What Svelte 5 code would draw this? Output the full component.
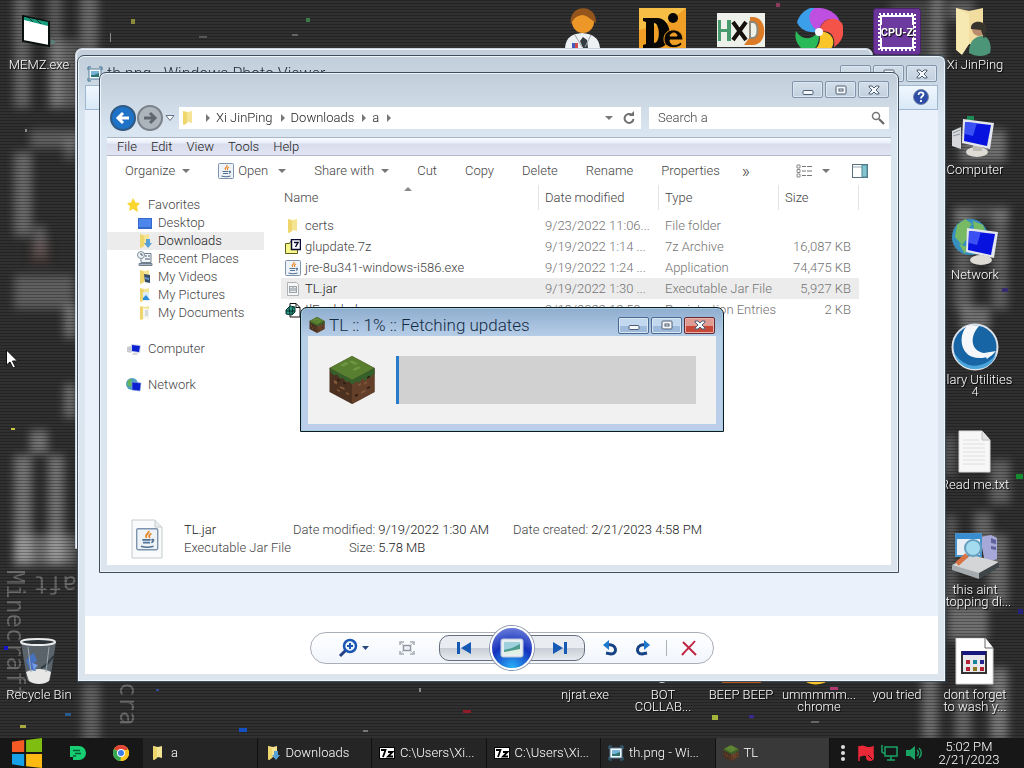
<script>
    const shortcuts = [
        { icon: "memz", label: "MEMZ.exe", col: 1, row: 1 },
        { icon: "recycle", label: "Recycle Bin", col: 1, row: 7 },
        { icon: "doctor", label: "", col: 8, row: 1 },
        { icon: "de", label: "", col: 9, row: 1 },
        { icon: "hxd", label: "", col: 10, row: 1 },
        { icon: "swirl", label: "", col: 11, row: 1 },
        { icon: "cpuz", label: "", col: 12, row: 1 },
        { icon: "user", label: "Xi JinPing", col: 13, row: 1 },
        { icon: "computer", label: "Computer", col: 13, row: 2 },
        { icon: "network", label: "Network", col: 13, row: 3 },
        { icon: "glary", label: "Glary Utilities\n4", col: 13, row: 4 },
        { icon: "text", label: "Read me.txt", col: 13, row: 5 },
        { icon: "diskscan", label: "this aint\nstopping di...", col: 13, row: 6 },
        { icon: "batch", label: "dont forget\nto wash y...", col: 13, row: 7 },
        { icon: "whitebar", label: "njrat.exe", col: 8, row: 7 },
        { icon: "dot", label: "BOT\nCOLLAB...", col: 9, row: 7 },
        { icon: "orangebar", label: "BEEP BEEP", col: 10, row: 7 },
        { icon: "swirl", label: "ummmmm...\nchrome", col: 11, row: 7 },
        { icon: "none", label: "you tried", col: 12, row: 7 },
    ];

    const menus = ["File", "Edit", "View", "Tools", "Help"];

    const places = [
        { icon: "desktop", label: "Desktop" },
        { icon: "downloads", label: "Downloads", current: true },
        { icon: "recent", label: "Recent Places" },
        { icon: "videos", label: "My Videos" },
        { icon: "pictures", label: "My Pictures" },
        { icon: "documents", label: "My Documents" },
    ];

    const files = [
        { icon: "folder", name: "certs", date: "9/23/2022 11:06...", type: "File folder", size: "" },
        { icon: "zip", name: "glupdate.7z", date: "9/19/2022 1:14 ...", type: "7z Archive", size: "16,087 KB" },
        { icon: "java", name: "jre-8u341-windows-i586.exe", date: "9/19/2022 1:24 ...", type: "Application", size: "74,475 KB" },
        { icon: "jar", name: "TL.jar", date: "9/19/2022 1:30 ...", type: "Executable Jar File", size: "5,927 KB", selected: true },
        { icon: "reg", name: "tlEnabled", date: "9/18/2022 12:50...", type: "Registration Entries", size: "2 KB" },
    ];

    const tasks = [
        { icon: "folder", label: "a" },
        { icon: "downloads", label: "Downloads" },
        { icon: "sevenzip", label: "C:\\Users\\Xi..." },
        { icon: "sevenzip", label: "C:\\Users\\Xi..." },
        { icon: "photo", label: "th.png - Wi..." },
        { icon: "grass", label: "TL", active: true },
    ];

    const specks = [
        [131, 19, 4, 5, "#8a8a3a"], [306, 18, 4, 4, "#3d7a4a"], [110, 33, 1, 9, "#888"],
        [199, 36, 8, 2, "#555"], [292, 34, 6, 2, "#666"], [776, 3, 4, 4, "#8a3a5a"],
        [967, 116, 7, 4, "#1c8a55"], [11, 428, 4, 2, "#c6c640"], [4, 646, 4, 4, "#1616c8"],
        [20, 725, 6, 3, "#a9a944"], [65, 713, 6, 3, "#285a90"], [156, 689, 3, 2, "#3548a0"],
        [239, 728, 8, 4, "#1450c0"], [419, 688, 2, 4, "#888"], [463, 710, 8, 3, "#8e1c28"],
        [363, 730, 5, 2, "#777"], [712, 715, 6, 5, "#a5b53c"], [749, 715, 5, 3, "#3a2a90"],
        [830, 687, 8, 3, "#b03a70"], [811, 721, 8, 2, "#666"], [1016, 474, 7, 5, "#168a30"],
        [1018, 609, 5, 5, "#25207a"], [1002, 288, 6, 4, "#352c70"], [25, 129, 2, 3, "#888"],
    ];

    // x, y, width, height, brightness of the blurred shapes
    const blobs = [
        [14, -8, 16, 116, 0.34], [48, -8, 14, 116, 0.28], [80, -8, 18, 60, 0.36],
        [52, 40, 26, 68, 0.3], [30, 130, 50, 18, 0.3], [14, 152, 18, 84, 0.36],
        [64, 140, 12, 20, 0.26], [34, 226, 12, 30, 0.32], [14, 275, 60, 34, 0.3],
        [64, 306, 12, 32, 0.42], [64, 384, 12, 34, 0.4], [30, 430, 18, 24, 0.42],
        [14, 455, 18, 110, 0.42], [48, 455, 16, 110, 0.42], [14, 535, 62, 30, 0.38],
        [82, 684, 18, 60, 0.3], [890, 0, 46, 60, 0.16], [932, -8, 12, 75, 0.4],
        [948, 0, 26, 20, 0.3], [960, 130, 46, 32, 0.4], [954, 206, 56, 14, 0.24],
        [954, 210, 18, 100, 0.3], [992, 210, 16, 100, 0.3], [960, 306, 30, 24, 0.4],
        [945, 435, 10, 40, 0.3], [990, 460, 20, 44, 0.32], [946, 515, 10, 90, 0.3],
        [974, 512, 18, 30, 0.34], [988, 535, 20, 70, 0.36], [948, 606, 40, 34, 0.4],
        [922, 668, 16, 72, 0.38], [955, 690, 16, 50, 0.34], [990, 668, 18, 72, 0.44],
    ];
</script>

{#snippet folder()}
    <path d="M3 1l5 1 4-1v12l-4-1-4 3-1-1z" fill="#f5e493" />
    <path d="M3 1l4 2v10l-3 2-1-1z" fill="#eed66d" />
{/snippet}

{#snippet java()}
    <rect x=".5" y=".5" width="15" height="15" rx="1" fill="#eef3f8" stroke="#7d93ae" />
    <path d="M9 2c1 2-3 2-1.500 5M11 4c-2 1-2 2-1 3" fill="none" stroke="#e58a2c" stroke-width="1.300" />
    <path d="M4.500 8.500h6M5 10.500h5M3.500 13c3 1 6 1 9 0M11 8.500c2-1 2 1 0 2" fill="none" stroke="#527294" stroke-width="1.200" />
{/snippet}

{#snippet grass()}
    <path d="M8 0l7.500 4v8L8 16 .5 12V4z" fill="#4c3020" />
    <path d="M8 8l7.500-4v8L8 16z" fill="#64402a" />
    <path d="M8 0l7.500 4L8 8 .5 4z" fill="#587f30" />
    <path d="M.5 4L8 8l7.500-4v2l-1 .5v.7l-1-.2-1 1.200-1-.7-1 1.300-1-.3-1.500 1-1-1-1 .2-1-1.400-1 .2-1-1.300-1 .3-1-1z" fill="#36602a" />
    <path d="M4 3l2-1 1 .6-2 1zM8 4.500l2-1 1 .4-2 1zM8 1.500l2 1-1 .4-2-1z" fill="#6f9640" />
    <path d="M2 8l1 .5v1L2 9zM4 10l1.500.7v.6L4 10.700zM6 12l1 .5v.6l-1-.5zM3 11l1 .5v.5L3 11.500zM10 9.500l1-.5v.6l-1 .5zM12 9l1-.6v.6l-1 .6zM11 12l1.500-.8v.6L11 12.600z" fill="#80583a" />
    <path d="M5 8.500l1 .6v.5l-1-.5zM3 7.500l1 .6v.5l-1-.5zM13 7l1-.5v.6l-1 .5zM9 13l1-.5v.6l-1 .6zM13 10.500l1-.5v.6l-1 .5z" fill="#2d1b12" />
{/snippet}

{#snippet photo()}
    <path d="M1 4V1h3M12 1h3v3M15 12v3h-3M4 15H1v-3" fill="none" stroke="#376d8c" />
    <rect x="2" y="3" width="12" height="10" fill="#f5fbff" stroke="#557d99" />
    <rect x="4" y="5" width="8" height="6" fill="#77b4dc" />
    <path d="M4 9l3 0 5-2v4H4z" fill="#2d7471" />
{/snippet}

{#snippet monitor()}
    <path d="M1 18l9-4v22l-9-3z" fill="#d5d7db" />
    <path d="M2 20l7-3M2 23l7-2" stroke="#8d939b" />
    <ellipse cx="26" cy="39" rx="11" ry="5" fill="#dedbd4" />
    <path d="M22 32h9v6h-9z" fill="#bdbab4" />
    <path d="M12 6l31 4-4 26-28-6z" fill="#e3e6ec" />
    <path d="M14 9l26 3-4 21-23-5z" fill="#0712df" />
    <path d="M14 9l12 1-4 13-8-2z" fill="#3b50f2" />
{/snippet}

{#snippet glyph(name)}
    <svg class="glyph" viewBox="0 0 16 16" aria-hidden="true">
        {#if name === "folder"}
            {@render folder()}
        {:else if name === "java"}
            {@render java()}
        {:else if name === "grass"}
            {@render grass()}
        {:else if name === "photo"}
            {@render photo()}
        {:else if name === "downloads"}
            {@render folder()}
            <path d="M9 6h4v4h2l-4 5-4-5h2z" fill="#56a0d6" />
        {:else if name === "videos"}
            {@render folder()}
            <path d="M7 5l6 1v8l-5-1z" fill="#384d66" />
            <path d="M8 8l4 1v2l-4-1z" fill="#6695c9" />
        {:else if name === "pictures"}
            {@render folder()}
            <path d="M6 5h6v9H6z" fill="#dcedfa" />
            <path d="M6 11l3-3 4 5H6z" fill="#2b8ed7" />
        {:else if name === "documents"}
            {@render folder()}
            <path d="M6 3l6 1v10l-6-1z" fill="#f5f5ef" />
            <path d="M8 6h3M8 8h3M8 10h3" stroke="#b6c2cf" />
        {:else if name === "desktop"}
            <path d="M1 3h14v11H1z" fill="#3568c8" />
            <path d="M2 4h12v8H2z" fill="#4b86ed" />
        {:else if name === "recent"}
            <path d="M6 2.500h8v9H4v-5" fill="#f1f4f6" stroke="#6f8091" />
            <circle cx="4" cy="4" r="3.500" fill="#edf3f5" stroke="#7f919e" />
            <path d="M4 2v2h2M8 5h2M11 5h2M8 8h5" fill="none" stroke="#4d5f72" />
            <path d="M2 12.500h13v2H2z" fill="#a9b4bf" stroke="#6f8091" />
        {:else if name === "star"}
            <path d="M7 1l2.500 4.500L14 6l-3 3.500 1 5.500-5-3-4 2 1-4.500L1 6l4-.5z" fill="#f8d52f" />
        {:else if name === "computer"}
            <path d="M1 6l4-1v7l-4-1z" fill="#c8cbd2" />
            <path d="M5 3l10 1-1 8-9-1z" fill="#cbd4e6" />
            <path d="M6 4l8 1-1 6-7-1z" fill="#0b21d1" />
            <ellipse cx="9" cy="13" rx="3" ry="1" fill="#d5d4d2" />
        {:else if name === "network"}
            <circle cx="6" cy="7" r="6" fill="#4c9fc4" />
            <path d="M2 3l4-1-1 3 2 2-3 3-3-2z" fill="#67b45f" />
            <path d="M6 5l9 1-1 8-8-1z" fill="#0b21d1" stroke="#8fa4d8" stroke-width=".6" />
        {:else if name === "zip"}
            <path d="M.5 4.500h4l1-2h7v12H.5z" fill="#f7f78c" stroke="#5e5e1d" />
            <rect x="6.500" y=".5" width="9" height="10" fill="#fff" stroke="#0b0b35" stroke-width="1.500" />
            <path d="M9 3.500h4L10.500 8" fill="none" stroke="#0b0b35" stroke-width="1.500" />
        {:else if name === "jar"}
            <path d="M2.500 1.500h9l2 2v11h-11z" fill="#f7f7f7" stroke="#adb2b6" />
            <rect x="4.500" y="5.500" width="7" height="6" fill="#e5e8ea" stroke="#9aa3aa" />
            <path d="M6 7v3M8 6v4M10 7v3" stroke="#8c97a1" />
        {:else if name === "reg"}
            <path d="M5 1.500h6l4 4V15H5z" fill="#fff" stroke="#111" />
            <path d="M11 1.500v4h4" fill="none" stroke="#111" />
            <path d="M1 8l4-4 5 1v5l-3 3-6-1z" fill="#2d9b8b" stroke="#07342d" />
            <path d="M4 5l1 7M8 5L7 12M1 9h9" stroke="#052c27" />
        {:else if name === "sevenzip"}
            <rect x=".5" y="2.500" width="15" height="11" fill="#fff" stroke="#000" />
            <path d="M2 5h4.500L4 12M9 7h4.500L9 11.500h5" fill="none" stroke="#000" stroke-width="1.800" />
        {/if}
    </svg>
{/snippet}

{#snippet picture(name)}
    <svg class="picture" viewBox="0 0 48 48" aria-hidden="true">
        {#if name === "memz"}
            <path d="M8 8l26 6v24l-26-5z" fill="#fff" stroke="#08110f" stroke-width="2" />
            <path d="M9 9l24 5v4l-24-6z" fill="#169c7c" />
            <path d="M14 10l4 4M22 12l4 4" stroke="#073f33" />
            <path d="M36 31l5 3-5 3z" fill="#5b8079" />
        {:else if name === "recycle"}
            <path d="M6 4h35l-6 38c-5 5-18 4-23 0z" fill="#66717b" opacity=".8" />
            <path d="M11 34c8-4 18-4 25 0l-2 9c-5 4-15 4-20 0z" fill="#e7e8e6" />
            <path d="M14 18l5-3 3 8-4 3 3 7-6-1-4-9z" fill="#4871bd" />
            <path d="M17 25l6 2-4 5z" fill="#729bea" />
            <path d="M26 30c6-2 9-8 13-12" fill="none" stroke="#2f3a43" stroke-width="2" />
            <path d="M13 9l3 25M34 9l-3 25" stroke="#9ba5ad" />
            <ellipse cx="23" cy="4" rx="17" ry="3" fill="#2c3339" stroke="#ebecec" stroke-width="2" />
        {:else if name === "doctor"}
            <path d="M4 40c1-12 8-14 17-15 11 1 17 5 18 15z" fill="#eef1f4" />
            <circle cx="22" cy="14" r="11" fill="#ed9728" />
            <path d="M10 17C6-4 36-6 35 15c-6-4-9-8-14-8-5 1-9 3-11 10z" fill="#93551c" />
            <path d="M22 29l-3 4 3 7h5l-1-8z" fill="#333a42" />
            <path d="M11 35h3v5h-3z" fill="#425ab9" />
            <path d="M14 35h3v5h-3z" fill="#d34d4d" />
            <path d="M14 27l7 12M30 27l-6 12" stroke="#9ba4aa" />
        {:else if name === "de"}
            <rect width="47" height="48" fill="#ef9e26" />
            <path d="M0 0h47L28 15 0 22z" fill="#f7be46" />
            <path d="M4 10h14c16 0 18 30 0 30H4v-3l3-1V14l-3-1zM15 15v20c7 0 6-20 0-20z" fill="#090703" />
            <circle cx="34" cy="10" r="5" fill="#090703" />
            <path d="M43 36c-3 5-17 6-18-4-1-13 19-14 19 0H31c0 6 6 6 11 2zM31 28h7c0-4-6-4-7 0z" fill="#090703" stroke="#ef9e26" />
        {:else if name === "hxd"}
            <rect y="5" width="48" height="34" fill="#eef0ea" />
            <path d="M1 12h3v9h6v-9h4v21h-4v-9H4v9H1z" fill="#4a9a70" />
            <path d="M33 9h3c15 0 15 28 0 28h-9l6-8z" fill="#dc7a25" />
            <path d="M33 14h3c6 0 6 16 0 16h-3z" fill="#eef0ea" stroke="#8d8879" stroke-width="2" />
            <path d="M16 14l13 18M29 14L16 32" stroke="#17110d" stroke-width="4" />
        {:else if name === "swirl"}
            <path d="M24 24C9 26 3 18 2 14 8-2 22-3 28 2c-10 4-11 14-4 22z" fill="#3b9fe9" />
            <path d="M24 24C12 16 12 4 20 0c14-1 24 7 25 15-10-8-19-3-21 9z" fill="#be4fe0" />
            <path d="M24 24c3-15 16-16 23-9 4 11-1 20-8 24 2-12-5-18-15-15z" fill="#f35348" />
            <path d="M24 24c12-2 18 9 12 17-7 6-18 7-25 3 12-1 16-9 13-20z" fill="#f9c529" />
            <path d="M24 24c1 15-6 21-14 19C2 38-1 30 1 23c6 9 14 10 23 1z" fill="#29b958" />
            <circle cx="24" cy="24" r="4" fill="#faf6ff" />
        {:else if name === "cpuz"}
            <rect x=".5" y=".5" width="47" height="46" rx="3" fill="#6a349a" stroke="#4b246d" />
            <rect x="8" y="8" width="32" height="32" fill="#6d3b9f" stroke="#fff" stroke-width="2" />
            <rect x="6" y="6" width="36" height="36" fill="none" stroke="#fff" stroke-width="2" stroke-dasharray="2 2" />
            <path d="M8 17h32v13H8z" fill="#6d3b9f" />
            <text x="24" y="28" text-anchor="middle" font-size="11" font-weight="bold" fill="#fff">CPU-Z</text>
        {:else if name === "user"}
            <path d="M5 0l13 3 14-3v38l-14-2-8 10-5-4z" fill="#f1dda0" />
            <path d="M5 0l13 6v30l-7 11-5-5z" fill="#f7e9b2" />
            <path d="M18 45c0-14 8-17 14-17 6 1 9 9 7 17-6 4-14 4-21 0z" fill="#4c9579" />
            <circle cx="28" cy="21" r="7" fill="#ba8c6e" />
            <path d="M20 21c-1-9 14-10 16 0l-3 10-3-9z" fill="#37332d" />
        {:else if name === "computer"}
            {@render monitor()}
        {:else if name === "network"}
            <circle cx="19" cy="19" r="18" fill="#378fbd" />
            <path d="M6 7l8-6 7 5-5 6 3 5-8 10-7-8zM22 3l10 4 3 8-8 3-4-7zM8 26l8 3-2 7z" fill="#78ba64" />
            <g transform="translate(4 4)">
                <path d="M12 6l31 4-4 26-28-6z" fill="#e3e6ec" />
                <path d="M14 9l26 3-4 21-23-5z" fill="#0712df" />
                <path d="M14 9l12 1-4 13-8-2z" fill="#3b50f2" />
                <ellipse cx="26" cy="38" rx="11" ry="5" fill="#dedbd4" />
            </g>
        {:else if name === "glary"}
            <circle cx="24" cy="24" r="22.500" fill="#1765a5" stroke="#dce2e8" stroke-width="2" />
            <path d="M3 29c8 15 26 20 42 3-4 10-11 14-21 14-11 0-19-7-21-17z" fill="#4ba4db" />
            <path d="M16 3C5 14 10 43 40 33l4-4C21 35 16 16 28 3c-4-1-8-1-12 0z" fill="#f5f7fa" />
            <path d="M33 30l12-2-9 8z" fill="#f5f7fa" />
        {:else if name === "text"}
            <path d="M8 3h23l8 9v32H8z" fill="#f7f7f7" stroke="#dadada" />
            <path d="M31 3v9h8" fill="#e1e1e1" stroke="#bebebe" />
            <path d="M12 12h16M12 16h22M12 20h22M12 24h22M12 28h22M12 32h22M12 36h22" stroke="#dededf" />
        {:else if name === "diskscan"}
            <path d="M29 4l11-2 6 3v21l-12 4z" fill="#a6a9d8" />
            <path d="M40 5l5 2v4l-5-1zM40 13l5 1v3l-5-1z" fill="#5f629c" />
            <path d="M5 1h25v22H5z" fill="#e8eef5" stroke="#4a91c7" stroke-width="2" />
            <path d="M5 1h25v5H5z" fill="#378dd0" />
            <path d="M1 32l20-10 27 7-20 13z" fill="#d3d5d6" />
            <path d="M1 32l27 8v6L1 37z" fill="#a5abaf" />
            <path d="M28 40l20-11v5L28 46z" fill="#3f464a" />
            <path d="M16 22l-10 9" stroke="#d87344" stroke-width="5" />
            <circle cx="22" cy="15" r="8" fill="#a5dbef" stroke="#659fc0" stroke-width="2" />
        {:else if name === "batch"}
            <path d="M5 0h29l8 10v36H5z" fill="#fff" stroke="#d1d1d1" />
            <path d="M34 0v10h8" fill="#fff" stroke="#666" />
            <rect x="11" y="14" width="24" height="21" fill="#e7e7ec" stroke="#333" stroke-width="2" />
            <path d="M11 15h24" stroke="#17177c" stroke-width="4" />
            <path d="M15 22h4v4h-4zM15 29h4v4h-4z" fill="#b32333" />
            <path d="M22 22h4v4h-4z" fill="#16859b" />
            <path d="M22 29h4v4h-4z" fill="#8a7822" />
            <path d="M29 22h4v4h-4z" fill="#25258f" />
            <path d="M29 29h4v4h-4z" fill="#b32333" />
        {:else if name === "whitebar"}
            <path d="M5 20h38v24H5z" fill="#eee" />
        {:else if name === "orangebar"}
            <path d="M5 20h39v25H5z" fill="#b85518" />
        {:else if name === "dot"}
            <circle cx="23" cy="39" r="6" fill="#ddd" />
        {/if}
    </svg>
{/snippet}

{#snippet controls(tone = "glass")}
    <div class="controls {tone}">
        <button aria-label="Minimize">
            <svg viewBox="0 0 16 16"><rect x="3" y="8.500" width="10" height="4" rx="1" /></svg>
        </button>
        <button aria-label="Maximize">
            <svg viewBox="0 0 16 16"><rect x="3" y="4" width="10" height="8" rx="1" /><rect x="6" y="7" width="4" height="2" /></svg>
        </button>
        <button class="close" aria-label="Close">
            <svg viewBox="0 0 16 16"><path d="M3 4h3l2 2 2-2h3v1l-3 3 3 3v1h-3l-2-2-2 2H3v-1l3-3-3-3z" /></svg>
        </button>
    </div>
{/snippet}

<div class="screen">
    <main class="desktop">
        <svg class="wallpaper" viewBox="0 0 1024 768" preserveAspectRatio="xMidYMin slice" aria-hidden="true">
            <defs>
                <filter id="soft"><feGaussianBlur stdDeviation="4" /></filter>
                <pattern id="lines" width="4" height="3" patternUnits="userSpaceOnUse">
                    <rect width="4" height="1" fill="#000" opacity=".26" />
                </pattern>
            </defs>
            <rect width="1024" height="768" fill="#303030" />
            <g filter="url(#soft)" opacity=".85">
                {#each blobs as [x, y, w, h, alpha]}
                    <rect {x} {y} width={w} height={h} fill="#eee" opacity={alpha} />
                {/each}
                <rect x="30" y="240" width="20" height="26" fill="#7b4a48" opacity=".3" />
            </g>
            <g class="graffiti">
                <text transform="translate(7 570) rotate(90)">Minecraft</text>
                <text transform="translate(77 576) rotate(180)">aft</text>
                <text transform="translate(120 682) rotate(90)">cra</text>
            </g>
            <rect width="1024" height="768" fill="url(#lines)" />
            {#each specks as [x, y, w, h, fill]}
                <rect {x} {y} width={w} height={h} {fill} />
            {/each}
        </svg>

        <div class="shortcuts">
            {#each shortcuts as item}
                <button class="shortcut" style:grid-column={item.col} style:grid-row={item.row} aria-label={item.label || item.icon}>
                    {@render picture(item.icon)}
                    <span>{item.label}</span>
                </button>
            {/each}
        </div>

        <div class="window back"></div>

        <section class="window viewer" aria-label="Photo viewer">
            <header class="titlebar">
                {@render glyph("photo")}
                <h2>th.png - Windows Photo Viewer</h2>
                {@render controls()}
            </header>
            <div class="viewer-menu">
                <button aria-label="Help">
                    <svg viewBox="0 0 16 16"><circle cx="8" cy="8" r="7.500" fill="#2c4ca5" stroke="#7686ab" /><path d="M5.500 6c0-4 5-3 5-.5C10.500 7 8 7 8 9.500M8 11v2" fill="none" stroke="#fff" stroke-width="1.800" /></svg>
                </button>
            </div>
            <div class="viewer-canvas"></div>
            <footer class="viewer-footer">
                <div class="player">
                    <button class="zoom" aria-label="Zoom">
                        <svg viewBox="0 0 32 20"><path d="M8 12l-6 6" stroke="#243f83" stroke-width="3" /><circle cx="12" cy="8" r="6" fill="#eef9ff" stroke="#1c56b4" stroke-width="2.500" /><path d="M9 8h6M12 5v6" stroke="#1c56b4" stroke-width="2" /><path d="M24 8h7l-3.500 4z" fill="#29477f" /></svg>
                    </button>
                    <button class="fit" aria-label="Fit to window">
                        <svg viewBox="0 0 16 16"><path d="M1 5V2h4M11 2h4v3M15 11v3h-4M5 14H1v-3" fill="none" stroke="#a5abb5" stroke-width="1.500" /><path d="M2 3l3 3M14 3l-3 3M2 13l3-3M14 13l-3-3" stroke="#c0c4cb" /><rect x="4.500" y="5.500" width="7" height="5" fill="#f1f3f6" stroke="#9299a5" stroke-width="1.500" /></svg>
                    </button>
                    <div class="steps">
                        <button aria-label="Previous">
                            <svg viewBox="0 0 16 14"><path d="M1 1h3v12H1zM15 1v12L5 7z" fill="#1559b5" /></svg>
                        </button>
                        <button class="slideshow" aria-label="Play slide show">
                            <svg viewBox="0 0 24 20"><rect x="1" y="1" width="22" height="18" rx="2" fill="#e8edf1" stroke="#b9c7d8" /><path d="M4 4h16v12H4z" fill="#9ed1dc" /><path d="M4 12l8-2 8-4v10H4z" fill="#4d9b8f" /><path d="M4 14l16-3v5H4z" fill="#e0f0e2" /></svg>
                        </button>
                        <button aria-label="Next">
                            <svg viewBox="0 0 16 14"><path d="M12 1h3v12h-3zM1 1v12l10-6z" fill="#1559b5" /></svg>
                        </button>
                    </div>
                    <button class="turn" aria-label="Rotate left">
                        <svg viewBox="0 0 16 16"><path d="M5 5c10-2 11 9 4 9l-5-1" fill="none" stroke="#164385" stroke-width="3" /><path d="M1 5l6-5v10z" fill="#1d79cb" /></svg>
                    </button>
                    <button class="turn" aria-label="Rotate right">
                        <svg viewBox="0 0 16 16"><path d="M11 5C1 3 0 14 7 14l5-1" fill="none" stroke="#164385" stroke-width="3" /><path d="M15 5L9 0v10z" fill="#1d79cb" /></svg>
                    </button>
                    <button class="delete" aria-label="Delete">
                        <svg viewBox="0 0 16 16"><path d="M2 2l13 13M14 1C10 6 6 9 1 15" fill="none" stroke="#c02443" stroke-width="2" /></svg>
                    </button>
                </div>
            </footer>
        </section>

        <section class="window explorer" aria-label="Downloads folder">
            <header class="titlebar">{@render controls()}</header>
            <div class="navigation">
                <button class="round back-button" aria-label="Back">
                    <svg viewBox="0 0 16 16"><path d="M14 8H3M8 3L3 8l5 5" /></svg>
                </button>
                <button class="round" aria-label="Forward">
                    <svg viewBox="0 0 16 16"><path d="M2 8h11M8 3l5 5-5 5" /></svg>
                </button>
                <button class="history" aria-label="Recent pages">
                    <svg viewBox="0 0 10 8"><path d="M1 1.500h8L5 6.500z" fill="#fff" stroke="#65758a" /></svg>
                </button>
                <nav class="address" aria-label="Address">
                    {@render glyph("folder")}
                    <i></i><a href="#user">Xi JinPing</a>
                    <i></i><a href="#downloads">Downloads</a>
                    <i></i><a href="#a">a</a><i></i>
                    <span class="caret"></span>
                    <button aria-label="Refresh">
                        <svg viewBox="0 0 14 14"><path d="M10 4a4.500 4.500 0 1 0 1.500 4" fill="none" stroke="#707070" stroke-width="2" /><path d="M7 5h5V0z" fill="#707070" /></svg>
                    </button>
                </nav>
                <label class="search">
                    <input type="text" placeholder="Search a" aria-label="Search a" />
                    <svg viewBox="0 0 14 14"><circle cx="5" cy="5" r="3.500" fill="none" stroke="#777" stroke-width="1.500" /><path d="M8 8l5 5" stroke="#666" stroke-width="2.200" /></svg>
                </label>
            </div>
            <div class="menubar">
                {#each menus as menu}
                    <button>{menu}</button>
                {/each}
            </div>
            <div class="pane">
                <div class="commands">
                    <button>Organize<span class="caret"></span></button>
                    <button>{@render glyph("java")}Open<span class="caret wide"></span></button>
                    <button>Share with<span class="caret"></span></button>
                    <button>Cut</button>
                    <button>Copy</button>
                    <button>Delete</button>
                    <button>Rename</button>
                    <button>Properties</button>
                    <button class="more">»</button>
                    <button class="views" aria-label="Change view">
                        <svg viewBox="0 0 16 14"><path d="M1 1h3v3H1zM1 5.500h3v3H1zM1 10h3v3H1z" fill="none" stroke="#8a8a8a" /><path d="M6 2.500h4M11 2.500h5M6 7h4M11 7h5M6 11.500h4M11 11.500h5" stroke="#777" /></svg>
                        <span class="caret wide"></span>
                    </button>
                    <button class="preview" aria-label="Preview pane">
                        <svg viewBox="0 0 16 14"><rect x=".5" y=".5" width="15" height="13" fill="#fff" stroke="#587080" /><path d="M1 3h9" stroke="#97a8b3" /><rect x="10" y="1" width="5" height="12" fill="#82c4cf" stroke="#4c8795" /></svg>
                    </button>
                </div>
                <div class="content">
                    <nav class="sidebar" aria-label="Places">
                        <a href="#favorites">{@render glyph("star")}Favorites</a>
                        {#each places as place}
                            <a class="child" class:current={place.current} href="#{place.icon}">{@render glyph(place.icon)}{place.label}</a>
                        {/each}
                        <a class="root" href="#computer">{@render glyph("computer")}Computer</a>
                        <a class="root" href="#network">{@render glyph("network")}Network</a>
                    </nav>
                    <table>
                        <thead>
                            <tr><th class="name">Name</th><th>Date modified</th><th>Type</th><th class="size">Size</th></tr>
                        </thead>
                        <tbody>
                            {#each files as file}
                                <tr class:selected={file.selected}>
                                    <td><span class="file">{@render glyph(file.icon)}{file.name}</span></td>
                                    <td>{file.date}</td>
                                    <td>{file.type}</td>
                                    <td class="amount">{file.size}</td>
                                </tr>
                            {/each}
                        </tbody>
                    </table>
                </div>
                <footer class="details">
                    <svg viewBox="0 0 32 40" aria-hidden="true">
                        <path d="M1 1h23l7 7v31H1z" fill="#f8fafb" stroke="#c6cccd" />
                        <path d="M24 1v7h7" fill="#e8eced" stroke="#c6cccd" />
                        <g transform="translate(5 9) scale(1.400)">{@render java()}</g>
                    </svg>
                    <div class="about"><strong>TL.jar</strong><span>Executable Jar File</span></div>
                    <dl>
                        <dt>Date modified:</dt><dd>9/19/2022 1:30 AM</dd>
                        <dt>Size:</dt><dd>5.78 MB</dd>
                    </dl>
                    <dl>
                        <dt>Date created:</dt><dd>2/21/2023 4:58 PM</dd>
                    </dl>
                </footer>
            </div>
        </section>

        <section class="window dialog" aria-label="TL">
            <header class="titlebar">
                {@render glyph("grass")}
                <h2>TL :: 1% :: Fetching updates</h2>
                {@render controls("vivid")}
            </header>
            <div class="dialog-body">
                <svg viewBox="0 0 16 16" aria-hidden="true">{@render grass()}</svg>
                <progress max="100" value="1">1%</progress>
            </div>
        </section>

        <svg class="cursor" viewBox="0 0 12 20" aria-hidden="true"><path d="M.5 1v15l3.500-3 3 6 2.500-1-3-6h5z" fill="#fff" stroke="#111" /></svg>
    </main>

    <footer class="taskbar">
        <button class="start" aria-label="Start">
            <svg viewBox="0 0 32 32"><path d="M0 4l13-2v13H0z" fill="#f65a24" /><path d="M15 2l17-2v15H15z" fill="#7fbd11" /><path d="M0 17h13v13L0 28z" fill="#16a1e9" /><path d="M15 17h17v15l-17-2z" fill="#fcb914" /></svg>
        </button>
        <button class="pin" aria-label="Notes">
            <svg viewBox="0 0 16 16"><path d="M0 1h9a7 7 0 0 1 0 14H3v-3H0z" fill="#17cf72" /><path d="M3 5.500h7M5 8.500h6M3 11h3" stroke="#075e36" stroke-width="1.400" /></svg>
        </button>
        <button class="pin" aria-label="Chrome">
            <svg viewBox="0 0 16 16"><circle cx="8" cy="8" r="8" fill="#fbc624" /><path d="M8 8L1 4a8 8 0 0 1 14 0z" fill="#e34435" /><path d="M8 8v8A8 8 0 0 1 1 4z" fill="#36a852" /><path d="M8 8l-.5 8H9a8 8 0 0 0 6.500-11H8z" fill="#fbc624" /><circle cx="8" cy="8" r="4" fill="#fff" /><circle cx="8" cy="8" r="3" fill="#397de6" /></svg>
        </button>
        <div class="tasks">
            {#each tasks as task}
                <button class:active={task.active}>{@render glyph(task.icon)}{task.label}</button>
            {/each}
        </div>
        <div class="tray">
            <svg class="dots" viewBox="0 0 6 18"><circle cx="3" cy="3" r="2" /><circle cx="3" cy="9" r="2" /><circle cx="3" cy="15" r="2" /></svg>
            <svg viewBox="0 0 18 18"><path d="M2 2v15M3 3c4-3 6 3 13 0v8c-6 2-8-2-13 1z" fill="#e92937" stroke="#e92937" stroke-width="1.500" /><circle cx="13" cy="13" r="4" fill="#e92937" /><path d="M11 11l4 4" stroke="#37090c" /></svg>
            <svg viewBox="0 0 18 18"><path d="M4 3h12v9H4zM10 12v4M6 16h8M1 1v7l3 2" fill="none" stroke="#18a365" stroke-width="1.500" /></svg>
            <svg viewBox="0 0 18 18"><path d="M1 6h4l5-4v14l-5-4H1z" fill="#18a365" /><path d="M12 6c2 2 2 4 0 6M14 4c3 3 3 7 0 10" fill="none" stroke="#18a365" stroke-width="1.500" /></svg>
        </div>
        <time datetime="2023-02-21T17:02">5:02 PM<br />2/21/2023</time>
    </footer>
</div>

<style>
    :global(body) {
        margin: 0;
        background: #202020;
    }

    .screen {
        display: flex;
        flex-direction: column;
        height: 100vh;
        overflow: hidden;
        color: #444;
        font: 300 13px/18px Roboto, "Liberation Sans", sans-serif;
        cursor: default;
    }

    button {
        display: flex;
        align-items: center;
        padding: 0;
        border: 0;
        background: none;
        color: inherit;
        font: inherit;
        white-space: nowrap;
    }

    a {
        color: inherit;
        text-decoration: none;
    }

    h2 {
        margin: 0;
        font-size: 16px;
        font-weight: 300;
    }

    svg {
        flex: none;
    }

    .glyph {
        width: 16px;
        height: 16px;
    }

    .desktop {
        position: relative;
        flex: 1;
        min-height: 0;
    }

    .wallpaper {
        position: absolute;
        width: 100%;
        height: 100%;
    }

    .graffiti {
        fill: #6a6a6a;
        font: 24px "DejaVu Sans Mono", monospace;
    }

    .shortcuts {
        position: relative;
        display: grid;
        grid-template-columns: repeat(13, minmax(0, 1fr));
        grid-auto-rows: 105px;
        padding: 8px 10px 0 0;
    }

    .shortcut {
        flex-direction: column;
        color: #fff;
        line-height: 12px;
        text-shadow: 1px 1px 1px #000;
        white-space: pre;
    }

    .shortcut span {
        margin-top: 3px;
    }

    .picture {
        width: 48px;
        height: 48px;
    }

    .window {
        position: absolute;
        box-sizing: border-box;
        display: flex;
        flex-direction: column;
        padding: 0 7px 7px;
        border: 1px solid #3e4c5b;
        border-radius: 7px 7px 0 0;
        background: linear-gradient(#c1ceda, #d9e5f0 60px, #dce5ee);
        box-shadow: inset 0 0 0 1px #edf4fa;
    }

    .back {
        top: 48px;
        right: 151px;
        bottom: 189px;
        left: 75px;
        border-color: #cbd3de;
    }

    .viewer {
        top: 55px;
        right: 78px;
        bottom: 56px;
        left: 77px;
    }

    .titlebar {
        display: flex;
        align-items: center;
        gap: 4px;
    }

    .viewer .titlebar {
        height: 29px;
        padding: 6px 1px 0 2px;
        box-sizing: border-box;
        color: #222d39;
    }

    .controls {
        display: flex;
        gap: 2px;
        margin-left: auto;
    }

    .controls button {
        justify-content: center;
        box-sizing: border-box;
        width: 31px;
        height: 17px;
        border: 1px solid #8194aa;
        border-radius: 2px;
        background: linear-gradient(#d3dee9, #c2d0de);
        box-shadow: inset 0 0 0 1px #dbe6f1;
    }

    .controls svg {
        width: 16px;
        height: 16px;
        fill: #f4f8fc;
        stroke: #4f5e72;
    }

    .vivid button {
        border-color: #486a93;
        background: linear-gradient(#c2d8ee 50%, #9ebbdb 50%);
    }

    .vivid .close {
        border-color: #632b33;
        background: linear-gradient(#df9b91 50%, #c54936 50%);
        box-shadow: inset 0 0 0 1px #edafaa;
    }

    .viewer-menu {
        display: flex;
        justify-content: flex-end;
        align-items: center;
        box-sizing: border-box;
        height: 25px;
        padding: 0 8px 2px;
        border: 1px solid #9fb7cf;
        background: linear-gradient(#f0f7ff, #d9e9f7);
    }

    .viewer-menu svg {
        width: 16px;
        height: 16px;
    }

    .viewer-canvas {
        flex: 1;
        background: #ebf1fb;
    }

    .viewer-footer {
        display: flex;
        align-items: center;
        justify-content: center;
        height: 58px;
        padding-top: 6px;
        box-sizing: border-box;
        background: #fff;
    }

    .player {
        display: flex;
        align-items: center;
        box-sizing: border-box;
        width: 404px;
        height: 32px;
        padding: 0 16px 0 27px;
        border: 1px solid #aaafb6;
        border-radius: 16px;
        background: linear-gradient(#fff, #f1f5fb);
    }

    .zoom svg {
        width: 32px;
        height: 20px;
    }

    .fit {
        margin: 0 24px 0 29px;
    }

    .fit svg,
    .turn svg,
    .delete svg {
        width: 16px;
        height: 16px;
    }

    .steps {
        display: flex;
        align-items: center;
        justify-content: space-between;
        flex: none;
        box-sizing: border-box;
        width: 146px;
        height: 26px;
        padding: 0 16px;
        border: 1px solid #656e7d;
        border-radius: 10px;
        background: linear-gradient(#e9edf1 50%, #c8ced6 52%, #e7ebef);
    }

    .steps button:not(.slideshow) svg {
        width: 16px;
        height: 14px;
    }

    .slideshow {
        justify-content: center;
        flex: none;
        box-sizing: border-box;
        width: 44px;
        height: 44px;
        border: 2px solid #fff;
        border-radius: 50%;
        background: radial-gradient(circle at 50% 100%, #28b4fa, #1632bd 52%, #7e8fe0);
        box-shadow: 0 0 0 1px #8995aa;
    }

    .slideshow svg {
        width: 24px;
        height: 20px;
    }

    .turn {
        margin-left: 17px;
    }

    .delete {
        margin-left: 15px;
        padding-left: 14px;
        border-left: 1px solid #aab2bc;
    }

    .explorer {
        top: 72px;
        right: 125px;
        bottom: 165px;
        left: 99px;
    }

    .explorer .titlebar {
        height: 33px;
        padding-right: 2px;
    }

    .navigation {
        display: flex;
        align-items: center;
        height: 24px;
        padding: 0 2px 0 3px;
    }

    .round {
        justify-content: center;
        box-sizing: border-box;
        width: 26px;
        height: 26px;
        margin-right: 1px;
        border: 2px solid #7a8189;
        border-radius: 50%;
        background: #acb4bc;
    }

    .back-button {
        border-color: #315981;
        background: #1e73c7;
    }

    .round svg {
        width: 16px;
        height: 16px;
        fill: none;
        stroke: #60676e;
        stroke-width: 3;
    }

    .round.back-button svg {
        stroke: #fff;
    }

    .history {
        margin: 0 4px 0 1px;
    }

    .history svg {
        width: 10px;
        height: 8px;
    }

    .address,
    .search {
        display: flex;
        align-items: center;
        height: 22px;
        background: #fff;
    }

    .address {
        flex: 1;
        padding: 0 5px 0 1px;
        color: #222;
    }

    .address i {
        margin: 0 6px 0 8px;
        border: 4px solid transparent;
        border-right: 0;
        border-left-color: #777;
    }

    .address .glyph {
        margin-right: 2px;
    }

    .caret {
        margin-left: 7px;
        border: 4px solid transparent;
        border-top-color: #777;
        border-bottom: 0;
    }

    .address .caret {
        margin: 0 9px 0 auto;
    }

    .address svg:not(.glyph),
    .search svg {
        width: 14px;
        height: 14px;
    }

    .search {
        box-sizing: border-box;
        width: 240px;
        margin-left: 8px;
        padding: 0 4px 0 9px;
    }

    .search input {
        flex: 1;
        min-width: 0;
        padding: 0;
        border: 0;
        background: none;
        font: inherit;
    }

    .search input::placeholder {
        color: #444;
        opacity: 1;
    }

    .menubar {
        display: flex;
        gap: 14px;
        height: 17px;
        margin-top: 7px;
        padding-left: 10px;
        border-top: 1px solid #abb4c3;
        border-bottom: 1px solid #b3b9cc;
        background: linear-gradient(#f8faff, #e8edf8 30%, #d9dcec 35%, #e1e5f2);
        color: #222;
    }

    .pane {
        display: flex;
        flex: 1;
        flex-direction: column;
        min-height: 0;
        background: #fff;
    }

    .commands {
        display: flex;
        align-items: center;
        gap: 28px;
        height: 29px;
        padding: 0 23px 0 18px;
    }

    .commands svg {
        width: 16px;
        height: 14px;
    }

    .commands .glyph {
        height: 16px;
        margin-right: 4px;
    }

    .caret.wide {
        margin-left: 10px;
    }

    .more {
        margin-left: -6px;
        font-size: 18px;
    }

    .views {
        margin-left: auto;
    }

    .preview {
        margin-left: -6px;
    }

    .content {
        display: flex;
        flex: 1;
        gap: 17px;
        min-height: 0;
    }

    .sidebar {
        width: 157px;
        padding-top: 11px;
    }

    .sidebar a {
        display: flex;
        align-items: center;
        gap: 6px;
        height: 18px;
        padding-left: 19px;
    }

    .sidebar .child {
        gap: 5px;
        padding-left: 30px;
    }

    .sidebar .root {
        margin-top: 18px;
    }

    .current {
        background: #ececec;
        color: #222;
    }

    table {
        width: 578px;
        height: 130px;
        border-spacing: 0;
        table-layout: fixed;
    }

    th {
        position: relative;
        box-sizing: border-box;
        width: 120px;
        height: 25px;
        padding: 0 0 0 6px;
        border-right: 1px solid #e3e3e3;
        font-weight: 300;
        text-align: left;
    }

    .name {
        width: 258px;
        padding-left: 3px;
    }

    .name::after {
        position: absolute;
        top: 2px;
        left: 48%;
        border: 4px solid transparent;
        border-top: 0;
        border-bottom-color: #888;
        content: "";
    }

    .size {
        width: 80px;
    }

    tbody::before {
        display: block;
        height: 5px;
        content: "";
    }

    td {
        height: 21px;
        padding: 0 0 0 6px;
        color: #737373;
        line-height: 18px;
        white-space: nowrap;
    }

    td:first-child {
        padding-left: 4px;
        color: #444;
    }

    .file {
        display: flex;
        align-items: center;
        gap: 4px;
    }

    .amount {
        padding-right: 8px;
        text-align: right;
    }

    .selected {
        background: #ececec;
    }

    .selected td:first-child {
        color: #222;
    }

    .details {
        display: flex;
        align-items: flex-start;
        height: 44px;
        padding-left: 24px;
    }

    .details > svg {
        width: 32px;
        height: 40px;
        margin-top: -2px;
    }

    .about {
        display: flex;
        flex-direction: column;
        width: 109px;
        margin-left: 21px;
    }

    .about strong {
        color: #222;
        font-weight: 300;
    }

    dl {
        display: grid;
        grid-template-columns: auto auto;
        column-gap: 3px;
        margin: 0 24px 0 0;
    }

    dt {
        text-align: right;
    }

    dd {
        margin: 0;
        color: #222;
    }

    .dialog {
        top: 307px;
        left: 300px;
        width: 424px;
        border-color: #10191f;
        background: linear-gradient(#8fadcf, #b8cfe8 30px, #bccfea);
        box-shadow: inset 0 0 0 1px #a3d1e2;
    }

    .dialog .titlebar {
        height: 28px;
        padding: 6px 1px 0;
        box-sizing: border-box;
        color: #132c45;
    }

    .dialog h2 {
        font-size: 17px;
    }

    .dialog-body {
        display: flex;
        align-items: center;
        height: 88px;
        padding: 0 20px;
        background: #f1f1f1;
    }

    .dialog-body svg {
        width: 48px;
        height: 48px;
        margin-right: 20px;
    }

    progress {
        flex: 1;
        height: 48px;
        border: 0;
        background: #d1d1d1;
        appearance: none;
    }

    progress::-webkit-progress-bar {
        background: #d1d1d1;
    }

    progress::-webkit-progress-value {
        background: #287bca;
    }

    .cursor {
        position: absolute;
        top: 349px;
        left: 6px;
        width: 12px;
        height: 20px;
    }

    .taskbar {
        position: relative;
        display: flex;
        align-items: center;
        height: 30px;
        background: #171717;
        color: #fff;
    }

    .start {
        margin-left: 11px;
    }

    .start svg {
        width: 32px;
        height: 30px;
    }

    .pin {
        margin-left: 27px;
    }

    .pin svg {
        width: 16px;
        height: 16px;
    }

    .tasks {
        display: flex;
        flex: 1;
        align-self: stretch;
        margin-left: 14px;
    }

    .tasks button {
        flex: 1;
        gap: 5px;
        padding-left: 7px;
        border-right: 1px solid #111;
        background: #252525;
    }

    .tasks .active {
        background: #393939;
    }

    .tray {
        display: flex;
        align-items: center;
        gap: 6px;
        padding: 0 14px 0 10px;
    }

    .tray svg {
        width: 18px;
        height: 18px;
    }

    .tray .dots {
        width: 6px;
        margin-right: 5px;
        fill: #ddd;
    }

    time {
        width: 64px;
        margin-right: 23px;
        line-height: 13px;
        text-align: center;
    }
</style>
